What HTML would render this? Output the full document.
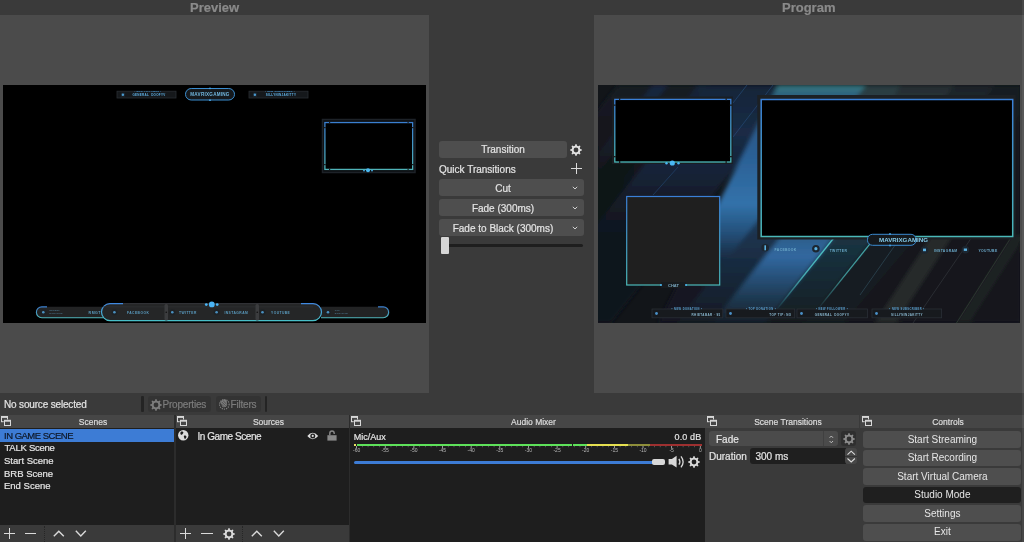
<!DOCTYPE html>
<html><head><meta charset="utf-8">
<style>
*{box-sizing:border-box;margin:0;padding:0}
html,body{width:1024px;height:542px;overflow:hidden;background:#3a3a3a;font-family:"Liberation Sans",sans-serif;color:#e4e4e4}
.t{-webkit-text-stroke:0.2px currentColor}
body{will-change:transform}
.a{position:absolute}
.t{white-space:nowrap;line-height:1}
.ptitle{font-weight:bold;font-size:13px;color:#8a8a8a;top:1px}
.panel{background:#4b4b4b;top:15px;height:378px}
.btn{background:#4e4e4e;border-radius:3px}
.dtitle{top:415px;height:13px;background:#464646}
.dtext{font-size:8.5px;color:#dcdcdc;top:417.5px;text-align:center}
.list{background:#1e1e1e}
.cbtn{position:absolute;left:863.4px;width:158px;height:16.8px;background:#4e4e4e;border-radius:3px;font-size:10px;color:#e6e6e6;text-align:center;line-height:1;padding-top:3.7px}
.f10{font-size:10px}
.row{position:absolute;left:4px;font-size:9.5px}
svg{position:absolute;overflow:visible}
</style></head><body>
<svg width="0" height="0" style="position:absolute">
<defs>
<path id="gear" fill-rule="evenodd" d="M4.94,1.73 L5.58,0.11 L6.42,0.11 L7.06,1.73 L8.27,2.23 L9.87,1.54 L10.46,2.13 L9.77,3.73 L10.27,4.94 L11.89,5.58 L11.89,6.42 L10.27,7.06 L9.77,8.27 L10.46,9.87 L9.87,10.46 L8.27,9.77 L7.06,10.27 L6.42,11.89 L5.58,11.89 L4.94,10.27 L3.73,9.77 L2.13,10.46 L1.54,9.87 L2.23,8.27 L1.73,7.06 L0.11,6.42 L0.11,5.58 L1.73,4.94 L2.23,3.73 L1.54,2.13 L2.13,1.54 L3.73,2.23Z M8.4,6 A2.4,2.4 0 1,0 3.6,6 A2.4,2.4 0 1,0 8.4,6Z"/>
<g id="float">
<rect x="1.5" y="1.5" width="6" height="5.2" fill="none" stroke="#d8d8d8" stroke-width="1"/>
<rect x="1.5" y="1.3" width="6" height="1.6" fill="#d8d8d8"/>
<rect x="3.7" y="4.5" width="7" height="6" fill="#464646"/>
<rect x="4.5" y="5.3" width="6" height="5.2" fill="none" stroke="#d8d8d8" stroke-width="1"/>
<rect x="4.5" y="5.1" width="6" height="1.6" fill="#d8d8d8"/>
</g>
</defs>
</svg>

<!-- titles -->
<div class="a t ptitle" style="left:190px">Preview</div>
<div class="a t ptitle" style="left:782px">Program</div>

<!-- preview panel -->
<div class="a panel" style="left:0;width:429px"></div>
<div class="a" id="prev" style="left:3px;top:85px;width:423px;height:238px;background:#000;overflow:hidden">
<svg style="left:0;top:0" width="423" height="238" viewBox="0 0 423 238">
<defs>
<linearGradient id="bt" x1="0" y1="0" x2="0" y2="1"><stop offset="0" stop-color="#3a7fd0"/><stop offset="1" stop-color="#4fb3b8"/></linearGradient>
<linearGradient id="bt2" x1="0" y1="0" x2="0" y2="1"><stop offset="0" stop-color="#3f88e0"/><stop offset="1" stop-color="#48c0c8"/></linearGradient>
</defs>
<!-- top boxes -->
<rect x="114" y="6.2" width="59" height="6.8" fill="#15181b" stroke="#2a2e33" stroke-width="0.8"/>
<rect x="118" y="7.8" width="3.8" height="3.8" fill="#1f2a33"/>
<circle cx="119.9" cy="9.7" r="1.2" fill="#4a9ad0"/>
<rect x="246" y="6.2" width="59" height="6.8" fill="#15181b" stroke="#2a2e33" stroke-width="0.8"/>
<rect x="250" y="7.8" width="3.8" height="3.8" fill="#1f2a33"/>
<circle cx="251.9" cy="9.7" r="1.2" fill="#4a9ad0"/>
<g font-family="Liberation Sans" font-weight="bold" text-anchor="middle">
<text x="145" y="6.6" font-size="2.3" fill="#4aa0e0" letter-spacing="0.3">• NEW FOLLOWER •</text>
<text x="146" y="11.3" font-size="3" fill="#5fb0e4" letter-spacing="0.3">GENERAL_DOOFYV</text>
<text x="277" y="6.6" font-size="2.3" fill="#4aa0e0" letter-spacing="0.3">• NEW SUBSCRIBER •</text>
<text x="278" y="11.3" font-size="3" fill="#5fb0e4" letter-spacing="0.3">SILLYNINJAKITTY</text>
</g>
<rect x="182.5" y="3.5" width="49" height="11.5" rx="5.7" fill="#15191d" stroke="#3b8ed0" stroke-width="1"/>
<circle cx="207" cy="3.3" r="0.9" fill="#4aa8e8"/><circle cx="207" cy="15.2" r="0.9" fill="#4aa8e8"/>
<text x="207" y="11" text-anchor="middle" font-size="4.6" font-weight="bold" fill="#72b8e0" font-family="Liberation Sans" letter-spacing="0.25">MAVRIXGAMING</text>
<!-- webcam frame -->
<rect x="319.5" y="34.5" width="92.5" height="53" fill="#0c0f12" stroke="#1d2228" stroke-width="1.5"/>
<rect x="321.9" y="37.55" width="87.75" height="46.86" fill="#000" stroke="url(#bt)" stroke-width="1.3"/><g fill="#1a1e22"><rect x="326" y="36.5" width="1.2" height="2"/><rect x="404.5" y="36.5" width="1.2" height="2"/><rect x="326" y="83.5" width="1.2" height="2"/><rect x="404.5" y="83.5" width="1.2" height="2"/><rect x="320.8" y="42" width="2" height="1.2"/><rect x="408.8" y="42" width="2" height="1.2"/><rect x="320.8" y="79" width="2" height="1.2"/><rect x="408.8" y="79" width="2" height="1.2"/></g>
<circle cx="365" cy="85.2" r="2" fill="#4ab8f0"/><circle cx="361" cy="85.6" r="0.9" fill="#4ab8f0"/><circle cx="369" cy="85.6" r="0.9" fill="#4ab8f0"/>
<!-- bottom bar -->
<path d="M38.5,221.7 H100 V233 H38.5 A5.65,5.65 0 0,1 38.5,221.7Z" fill="#222324"/>
<path d="M44,221.9 H38.8 A5.4,5.4 0 0,0 38.8,232.7 H100" fill="none" stroke="url(#bt)" stroke-width="1.1"/>
<path d="M381,221.7 H318 V233 H381 A5.65,5.65 0 0,0 381,221.7Z" fill="#222324"/>
<path d="M375,221.9 H380.2 A5.4,5.4 0 0,1 380.2,232.7 H318" fill="none" stroke="url(#bt)" stroke-width="1.1"/>
<path d="M107,218.6 H310 A8.5,8.5 0 0,1 310,235.6 H107 A8.5,8.5 0 0,1 107,218.6Z" fill="#252627" stroke="#34363a" stroke-width="1"/>
<path d="M120,218.6 H107 A8.5,8.5 0 0,0 107,235.6 H310 A8.5,8.5 0 0,0 310,218.6 H298" fill="none" stroke="url(#bt2)" stroke-width="1.2"/>
<rect x="100" y="221.5" width="210" height="0.8" fill="#2e3032"/>
<rect x="161.5" y="219" width="3.5" height="16.5" rx="1.5" fill="#3b3c3e"/>
<rect x="252.5" y="219" width="3.5" height="16.5" rx="1.5" fill="#3b3c3e"/>
<circle cx="163.25" cy="227.2" r="0.8" fill="#111"/><circle cx="254.25" cy="227.2" r="0.8" fill="#111"/>
<circle cx="208.8" cy="219.4" r="2.9" fill="#4ab4f4"/><circle cx="203.3" cy="219.6" r="1.4" fill="#4ab4f4"/><circle cx="214.2" cy="219.6" r="1.4" fill="#4ab4f4"/>
<g fill="#5a9cc0" font-family="Liberation Sans" font-size="3.3" font-weight="bold" letter-spacing="0.45">
<text x="124" y="228.8">FACEBOOK</text><text x="176" y="228.8">TWITTER</text><text x="221.4" y="228.8">INSTAGRAM</text><text x="268" y="228.8">YOUTUBE</text>
<text x="85.6" y="228.6" font-size="3.6">RMGT</text>
</g>
<g fill="#4e7890" font-family="Liberation Sans" font-size="2.2" font-weight="bold" letter-spacing="0.2">
<text x="46.5" y="226.2">RECENT</text><text x="46.5" y="229.4">DONATION</text>
<text x="331.8" y="226.2">TOP</text><text x="331.8" y="229.4">DONATION</text>
</g>
<g fill="#1e2226"><circle cx="40.3" cy="227.2" r="3"/><circle cx="111.4" cy="227.2" r="3"/><circle cx="169.3" cy="227.2" r="3"/><circle cx="213.6" cy="227.2" r="3"/><circle cx="259.5" cy="227.2" r="3"/><circle cx="325" cy="227.2" r="3"/></g>
<g fill="#4a90c0"><circle cx="40.3" cy="227.2" r="1.3"/><circle cx="111.4" cy="227.2" r="1.3"/><circle cx="169.3" cy="227.2" r="1.3"/><circle cx="213.6" cy="227.2" r="1.3"/><circle cx="259.5" cy="227.2" r="1.3"/><circle cx="325" cy="227.2" r="1.3"/></g>
</svg>
</div>

<!-- program panel -->
<div class="a panel" style="left:594px;width:430px"></div>
<div class="a" id="prog" style="left:598px;top:85px;width:422px;height:238px;background:#121519;overflow:hidden">
<svg style="left:0;top:0" width="423" height="238" viewBox="0 0 423 238">
<defs>
<linearGradient id="pt" x1="0" y1="0" x2="0" y2="1"><stop offset="0" stop-color="#3a80d8"/><stop offset="1" stop-color="#4ab8b8"/></linearGradient>
<linearGradient id="bg1" x1="0" y1="1" x2="1" y2="0"><stop offset="0" stop-color="#1a2a3e"/><stop offset="0.5" stop-color="#2d5a88"/><stop offset="1" stop-color="#3a7890"/></linearGradient>
<linearGradient id="bg2" x1="0" y1="0" x2="1" y2="0"><stop offset="0" stop-color="#162436"/><stop offset="1" stop-color="#1f3a58"/></linearGradient>
<filter id="bl" x="-20%" y="-20%" width="140%" height="140%"><feGaussianBlur stdDeviation="2"/></filter>
<filter id="bl4" x="-30%" y="-30%" width="160%" height="160%"><feGaussianBlur stdDeviation="5"/></filter>
</defs>
<!-- background streaks -->
<defs>
<linearGradient id="gZ" x1="0" y1="0" x2="0" y2="238" gradientUnits="userSpaceOnUse"><stop offset="0" stop-color="#151b24"/><stop offset="0.15" stop-color="#13181f"/><stop offset="0.3" stop-color="#111519"/></linearGradient>
<linearGradient id="gS" x1="0" y1="0" x2="0" y2="238" gradientUnits="userSpaceOnUse"><stop offset="0" stop-color="#1a2840"/><stop offset="0.2" stop-color="#162234"/><stop offset="0.45" stop-color="#111519" stop-opacity="0"/></linearGradient>
<linearGradient id="gA0" x1="0" y1="0" x2="0" y2="238" gradientUnits="userSpaceOnUse"><stop offset="0" stop-color="#172438"/><stop offset="0.2" stop-color="#1a2c46"/><stop offset="0.38" stop-color="#152236"/><stop offset="0.52" stop-color="#121a24"/><stop offset="0.7" stop-color="#11161c"/></linearGradient>
<linearGradient id="gW" x1="0" y1="0" x2="0" y2="238" gradientUnits="userSpaceOnUse"><stop offset="0" stop-color="#36787e"/><stop offset="0.06" stop-color="#2a5a80"/><stop offset="0.25" stop-color="#2a5c90"/><stop offset="0.5" stop-color="#3272aa"/><stop offset="0.62" stop-color="#24507a"/><stop offset="0.72" stop-color="#1a2e46"/><stop offset="0.85" stop-color="#121820"/></linearGradient>
<linearGradient id="gA" x1="0" y1="0" x2="0" y2="238" gradientUnits="userSpaceOnUse"><stop offset="0" stop-color="#36787e"/><stop offset="0.15" stop-color="#2c6088"/><stop offset="0.3" stop-color="#3376b0"/><stop offset="0.42" stop-color="#3070a8"/><stop offset="0.56" stop-color="#22466a"/><stop offset="0.7" stop-color="#141c26"/></linearGradient>
<linearGradient id="gA2" x1="0" y1="0" x2="0" y2="238" gradientUnits="userSpaceOnUse"><stop offset="0" stop-color="#2c3c40"/><stop offset="0.45" stop-color="#244a6c"/><stop offset="0.62" stop-color="#1c3450"/><stop offset="0.8" stop-color="#18283a"/><stop offset="1" stop-color="#121a24"/></linearGradient>
<linearGradient id="gB" x1="0" y1="0" x2="0" y2="238" gradientUnits="userSpaceOnUse"><stop offset="0" stop-color="#272d31"/><stop offset="0.6" stop-color="#2c5a80"/><stop offset="0.72" stop-color="#3168a0"/><stop offset="0.9" stop-color="#1e3850"/><stop offset="1" stop-color="#161e28"/></linearGradient>
<linearGradient id="gC" x1="0" y1="0" x2="0" y2="238" gradientUnits="userSpaceOnUse"><stop offset="0" stop-color="#1e2428"/><stop offset="0.65" stop-color="#1a3442"/><stop offset="0.9" stop-color="#16242c"/><stop offset="1" stop-color="#14191e"/></linearGradient>
<linearGradient id="gL" x1="0" y1="0" x2="0" y2="238" gradientUnits="userSpaceOnUse"><stop offset="0.55" stop-color="#50c8c8" stop-opacity="0"/><stop offset="0.66" stop-color="#50c8c8" stop-opacity="0.95"/><stop offset="0.8" stop-color="#50c8c8" stop-opacity="0.8"/><stop offset="0.95" stop-color="#50c8c8" stop-opacity="0"/></linearGradient>
</defs>
<g filter="url(#bl)">
<polygon points="20,0 130,0 -60,238 -170,238" fill="url(#gZ)"/><polygon points="55,0 70,0 0,88 0,69" fill="url(#gS)"/><polygon points="100,0 112,0 0,140 0,125" fill="url(#gS)" opacity="0.8"/>
<polygon points="110,0 203,0 13,238 -80,238" fill="url(#gA0)"/>
<polygon points="180,0 300,0 230,238 60,238" fill="url(#gW)"/>
<polygon points="268,0 304,0 114,238 78,238" fill="url(#gA2)"/>
<polygon points="304,0 357,0 167,238 114,238" fill="url(#gB)"/>
<polygon points="357,0 398,0 208,238 167,238" fill="url(#gC)"/>
<polygon points="398,0 423,0 423,30 246,238 208,238" fill="#181c20"/>
<polygon points="423,30 423,238 246,238" fill="#15181b"/>
<polygon points="334,150 355,150 298,238 277,238" fill="#26292c"/>
<polygon points="414.6,150 427.6,150 371.5,238 358.5,238" fill="#1e2124"/>
</g>
<polygon points="357,0 358.8,0 168.8,238 167,238" fill="url(#gL)"/>
<polygon points="398,0 399.6,0 209.6,238 208,238" fill="url(#gL)" opacity="0.85"/>
<line x1="374" y1="152" x2="315" y2="238" stroke="#3a4044" stroke-width="0.6" opacity="0.9"/><line x1="414.6" y1="150" x2="358.5" y2="238" stroke="#3e4a40" stroke-width="0.6" opacity="0.9"/><line x1="300" y1="156" x2="262" y2="210" stroke="#3a6070" stroke-width="0.6" opacity="0.8"/>
<line x1="80" y1="82" x2="55" y2="110" stroke="#2a5a90" stroke-width="0.7" opacity="0.6"/><line x1="149" y1="0" x2="135" y2="18" stroke="#2a5a90" stroke-width="0.8" opacity="0.6"/><line x1="175" y1="0" x2="135" y2="52" stroke="#2e6098" stroke-width="0.8" opacity="0.5"/>
<!-- webcam frame -->
<rect x="14" y="11.5" width="120.8" height="67.5" fill="#1a1e22"/>
<rect x="16.8" y="14.4" width="116" height="62.6" fill="#000" stroke="url(#pt)" stroke-width="1.3"/><g fill="#1a1e22"><rect x="21" y="13.2" width="1.3" height="2.2"/><rect x="127.5" y="13.2" width="1.3" height="2.2"/><rect x="21" y="76" width="1.3" height="2.2"/><rect x="127.5" y="76" width="1.3" height="2.2"/><rect x="15.6" y="19.5" width="2.2" height="1.3"/><rect x="131.8" y="19.5" width="2.2" height="1.3"/><rect x="15.6" y="71" width="2.2" height="1.3"/><rect x="131.8" y="71" width="2.2" height="1.3"/></g>
<circle cx="74.3" cy="78" r="2.6" fill="#4ab8f4"/><circle cx="68.5" cy="78.3" r="1.2" fill="#4ab8f4"/><circle cx="80.5" cy="78.3" r="1.2" fill="#4ab8f4"/>
<!-- big frame -->
<rect x="159.3" y="10" width="258.4" height="144.5" fill="#1c2024"/>
<rect x="163.2" y="14.5" width="251.5" height="137" fill="#000" stroke="url(#pt)" stroke-width="1.5"/>
<!-- chat -->
<rect x="28.7" y="111.5" width="93" height="88.5" fill="#1f1f1f" stroke="url(#pt)" stroke-width="1.2"/>
<rect x="63" y="197" width="25" height="6" fill="#181b1e"/>
<circle cx="63" cy="200" r="1" fill="#4ab8f4"/><circle cx="88" cy="200" r="1" fill="#4ab8f4"/>
<text x="75.5" y="201.8" text-anchor="middle" font-size="4" font-weight="bold" fill="#7aa8c0" font-family="Liberation Sans">CHAT</text>
<!-- mavrix pill -->
<rect x="269.5" y="149.3" width="48.5" height="11" rx="5" fill="#15191d" stroke="#3a8ad0" stroke-width="1"/>
<circle cx="292" cy="149" r="0.9" fill="#4aa8e8"/><circle cx="292" cy="160.5" r="0.9" fill="#4aa8e8"/>
<text x="281" y="157.2" font-size="6.2" font-weight="bold" fill="#84cae8" font-family="Liberation Sans" letter-spacing="0">MAVRIXGAMING</text>
<!-- socials -->
<g fill="#1c2630"><circle cx="167.2" cy="162.7" r="3.8"/><circle cx="217.9" cy="163.7" r="3.8"/><circle cx="326.5" cy="165" r="3.8"/><circle cx="367.4" cy="164.7" r="3.8"/></g>
<g fill="#5ab0e0"><rect x="166.4" y="160.3" width="1.6" height="5"/><circle cx="217.9" cy="163.7" r="1.6"/><rect x="325" y="163.6" width="3" height="2.6"/><rect x="365.8" y="163.5" width="3.2" height="2.4"/></g>
<g fill="#6aa8c8" font-family="Liberation Sans" font-size="3.4" font-weight="bold" letter-spacing="0.35">
<text x="176.6" y="165.6">FACEBOOK</text><text x="231.7" y="166.8">TWITTER</text><text x="336" y="166.8">INSTAGRAM</text><text x="380.5" y="166.8">YOUTUBE</text>
</g>
<!-- bottom bars -->
<g fill="#171a1e" stroke="#2a2f36" stroke-width="0.8">
<rect x="54" y="224" width="70.8" height="8.8"/><rect x="128" y="224" width="68.7" height="8.8"/><rect x="199" y="224" width="70.5" height="8.8"/><rect x="274" y="224" width="69.6" height="8.8"/>
</g>
<g fill="#4a90c8"><circle cx="58.5" cy="228.5" r="1.4"/><circle cx="132.5" cy="228.5" r="1.4"/><circle cx="203.5" cy="228.5" r="1.4"/><circle cx="278.5" cy="228.5" r="1.4"/></g>
<g fill="#5aa0d0" font-family="Liberation Sans" font-size="2.6" font-weight="bold" text-anchor="middle" letter-spacing="0.45">
<text x="89" y="225.4">• NEW DONATION •</text><text x="163" y="225.4">• TOP DONATION •</text><text x="234" y="225.4">• NEW FOLLOWER •</text><text x="309" y="225.4">• NEW SUBSCRIBER •</text>
</g>
<g fill="#8ab8d0" font-family="Liberation Sans" font-size="3" font-weight="bold" letter-spacing="0.4">
<text x="122.6" y="230.8" text-anchor="end">RHIETABAR · 95</text><text x="193.6" y="230.8" text-anchor="end">TOP TIP: NO</text><text x="234" y="230.8" text-anchor="middle">GENERAL_DOOFYV</text><text x="309" y="230.8" text-anchor="middle">SILLYNINJAKITTY</text>
</g>
</svg>
</div>

<!-- transitions middle -->
<div class="a btn" style="left:439px;top:141px;width:128px;height:17px"></div>
<div class="a t f10" style="left:439px;top:145px;width:128px;text-align:center">Transition</div>
<svg style="left:570.3px;top:143.5px" width="12" height="12"><use href="#gear" fill="#e0e0e0"/></svg>
<div class="a t f10" style="left:439px;top:165px">Quick Transitions</div>
<div class="a" style="left:571px;top:168px;width:10.8px;height:1.1px;background:#dadada"></div>
<div class="a" style="left:575.8px;top:163.1px;width:1.1px;height:10.8px;background:#dadada"></div>

<div class="a btn" style="left:439px;top:179px;width:145px;height:17px"></div>
<div class="a t f10" style="left:439px;top:183.5px;width:128px;text-align:center">Cut</div>
<div class="a btn" style="left:439px;top:199px;width:145px;height:17px"></div>
<div class="a t f10" style="left:439px;top:203.5px;width:128px;text-align:center">Fade (300ms)</div>
<div class="a btn" style="left:439px;top:219px;width:145px;height:17px"></div>
<div class="a t f10" style="left:439px;top:223.5px;width:128px;text-align:center">Fade to Black (300ms)</div>
<svg style="left:572px;top:185.5px" width="6" height="4"><path d="M0.8,0.8 L3,3 L5.2,0.8" fill="none" stroke="#d0d0d0" stroke-width="1"/></svg>
<svg style="left:572px;top:205.5px" width="6" height="4"><path d="M0.8,0.8 L3,3 L5.2,0.8" fill="none" stroke="#d0d0d0" stroke-width="1"/></svg>
<svg style="left:572px;top:225.5px" width="6" height="4"><path d="M0.8,0.8 L3,3 L5.2,0.8" fill="none" stroke="#d0d0d0" stroke-width="1"/></svg>
<div class="a" style="left:448px;top:243.5px;width:135px;height:3.5px;background:#1e1e1e;border-radius:2px"></div>
<div class="a" style="left:440.5px;top:237px;width:8.5px;height:17px;background:#d6d6d6;border-radius:1px"></div>

<!-- toolbar row -->
<div class="a t f10" style="left:4px;top:400px;letter-spacing:-0.17px">No source selected</div>
<div class="a" style="left:141.4px;top:395.8px;width:2.2px;height:16px;background:#242424;border-radius:1px"></div>
<div class="a" style="left:148.2px;top:396.4px;width:62.9px;height:15.3px;background:#333333;border-radius:3px"></div>
<svg style="left:150px;top:398.5px" width="12" height="12"><use href="#gear" fill="#7c7c7c"/></svg>
<div class="a t f10" style="left:162.5px;top:400px;color:#7c7c7c;letter-spacing:-0.2px">Properties</div>
<div class="a" style="left:215.9px;top:396.4px;width:44.7px;height:15.3px;background:#333333;border-radius:3px"></div>
<svg style="left:217.5px;top:398px" width="12" height="12" viewBox="0 0 12 12"><circle cx="6.3" cy="6.3" r="4.8" fill="none" stroke="#7c7c7c" stroke-width="1.2" stroke-dasharray="1.2 1"/><path d="M2.2,4.2 A4,4 0 0,1 8.6,2.6 L9.2,6.8 A3.6,3.6 0 0,1 4.6,9 Z" fill="#7c7c7c"/><path d="M3.6,3.8 L7.6,7.8 M5.2,2.8 L8.6,6.2 M3,5.6 L6.2,8.8" stroke="#333" stroke-width="0.6"/></svg>
<div class="a t f10" style="left:230.5px;top:400px;color:#7c7c7c;letter-spacing:-0.2px">Filters</div>
<div class="a" style="left:265.2px;top:395.8px;width:2.2px;height:16px;background:#242424;border-radius:1px"></div>

<!-- dock titles -->
<div class="a dtitle" style="left:0;width:174px"></div>
<div class="a dtitle" style="left:176px;width:173px"></div>
<div class="a dtitle" style="left:350px;width:355px"></div>
<div class="a dtitle" style="left:705px;width:154px"></div>
<div class="a dtitle" style="left:860px;width:164px"></div>
<svg style="left:0;top:415px" width="12" height="12"><use href="#float"/></svg>
<svg style="left:176px;top:415px" width="12" height="12"><use href="#float"/></svg>
<svg style="left:350.2px;top:415px" width="12" height="12"><use href="#float"/></svg>
<svg style="left:705.8px;top:415px" width="12" height="12"><use href="#float"/></svg>
<svg style="left:860.6px;top:415px" width="12" height="12"><use href="#float"/></svg>
<div class="a t dtext" style="left:0;width:186px">Scenes</div>
<div class="a t dtext" style="left:176px;width:185px">Sources</div>
<div class="a t dtext" style="left:350px;width:367px">Audio Mixer</div>
<div class="a t dtext" style="left:705px;width:166px">Scene Transitions</div>
<div class="a t dtext" style="left:860px;width:176px">Controls</div>

<!-- scenes -->
<div class="a list" style="left:0;top:428px;width:174px;height:97px"></div>
<div class="a" style="left:0;top:429px;width:174px;height:13px;background:#3d7cd5"></div>
<div class="a t row" style="top:430.5px;color:#0e1828;letter-spacing:-0.5px">IN GAME SCENE</div>
<div class="a t row" style="top:443.2px;letter-spacing:-0.26px;left:4.5px">TALK Scene</div>
<div class="a t row" style="top:455.9px">Start Scene</div>
<div class="a t row" style="top:468.6px">BRB Scene</div>
<div class="a t row" style="top:481.3px">End Scene</div>
<div class="a" style="left:0;top:525px;width:174px;height:17px;background:#3a3a3a"></div>

<!-- sources -->
<div class="a list" style="left:176px;top:428px;width:173px;height:97px"></div>
<div class="a" style="left:176px;top:525px;width:173px;height:17px;background:#3a3a3a"></div>
<div class="a" style="left:174px;top:415px;width:2px;height:127px;background:#2c2c2c"></div>
<div class="a" style="left:349px;top:415px;width:1px;height:127px;background:#2c2c2c"></div>

<!-- audio mixer -->
<div class="a list" style="left:350px;top:428px;width:355px;height:114px"></div>


<!-- sources rows -->
<svg style="left:178.4px;top:430px" width="11" height="11" viewBox="0 0 11 11"><circle cx="5.25" cy="5.25" r="5.2" fill="#dcdcdc"/><path d="M3.2,1.6 C4.2,1.2 5.2,1.8 5.4,2.6 C5.6,3.6 4.6,3.8 4.2,4.4 C3.6,5.2 2.6,4.6 2.4,3.8 C2.2,3 2.6,2 3.2,1.6Z M6.4,5.6 C7.2,5.4 8.2,5.8 8.4,6.6 C8.6,7.6 7.8,8.6 7,9.2 C6.4,8.6 6.4,7.8 6,7.2 C5.8,6.6 5.8,5.8 6.4,5.6Z" fill="#1e1e1e"/></svg>
<div class="a t f10" style="left:197.5px;top:431.5px;letter-spacing:-0.45px">In Game Scene</div>
<svg style="left:306.6px;top:431.5px" width="12" height="8" viewBox="0 0 12 8"><path d="M0.3,3.9 Q5.7,-2.6 11.2,3.9 Q5.7,10.4 0.3,3.9Z" fill="#dedede"/><circle cx="5.75" cy="3.9" r="2.5" fill="#1e1e1e"/><circle cx="5.75" cy="3.9" r="1.1" fill="#dedede"/></svg>
<svg style="left:326.5px;top:429.8px" width="10" height="11" viewBox="0 0 10 11"><rect x="0.4" y="5.2" width="9.2" height="5.4" fill="#888"/><path d="M2.8,5.2 V3.2 A2.2,2.2 0 0,1 7.2,3.2 V4" fill="none" stroke="#888" stroke-width="1.4"/></svg>

<!-- bottom toolbars -->
<div class="a" style="left:4px;top:532.7px;width:11.3px;height:1.3px;background:#dadada"></div>
<div class="a" style="left:9px;top:527.7px;width:1.3px;height:11.3px;background:#dadada"></div>
<div class="a" style="left:24.8px;top:532.7px;width:11.3px;height:1.3px;background:#dadada"></div>
<div class="a" style="left:44px;top:526px;width:1px;height:16px;border-left:1px dotted #262626"></div>
<svg style="left:53px;top:530px" width="12" height="7"><path d="M0.8,6.3 L5.8,1.2 L10.8,6.3" fill="none" stroke="#dadada" stroke-width="1.4"/></svg>
<svg style="left:74.5px;top:530px" width="12" height="7"><path d="M0.8,0.8 L5.8,5.9 L10.8,0.8" fill="none" stroke="#dadada" stroke-width="1.4"/></svg>

<div class="a" style="left:180px;top:532.7px;width:11.3px;height:1.3px;background:#dadada"></div>
<div class="a" style="left:185.1px;top:527.7px;width:1.3px;height:11.3px;background:#dadada"></div>
<div class="a" style="left:201.4px;top:532.7px;width:11.3px;height:1.3px;background:#dadada"></div>
<svg style="left:222.5px;top:527.5px" width="12" height="12"><use href="#gear" fill="#dadada"/></svg>
<div class="a" style="left:242px;top:526px;width:1px;height:16px;border-left:1px dotted #262626"></div>
<svg style="left:251px;top:530px" width="12" height="7"><path d="M0.8,6.3 L5.8,1.2 L10.8,6.3" fill="none" stroke="#dadada" stroke-width="1.4"/></svg>
<svg style="left:272.5px;top:530px" width="12" height="7"><path d="M0.8,0.8 L5.8,5.9 L10.8,0.8" fill="none" stroke="#dadada" stroke-width="1.4"/></svg>

<!-- audio mixer content -->
<div class="a t" style="left:353.8px;top:432.8px;font-size:9px">Mic/Aux</div>
<div class="a t" style="left:674.5px;top:432.9px;font-size:9px;letter-spacing:0.15px">0.0 dB</div>
<div class="a" style="left:353.5px;top:443.5px;width:2.7px;height:2.7px;background:#e8e060"></div>
<div class="a" style="left:357px;top:444px;width:214.6px;height:2px;background:#5ee25a"></div>
<div class="a" style="left:573.4px;top:444px;width:13.2px;height:2px;background:#5ee25a"></div>
<div class="a" style="left:586.6px;top:444px;width:41.3px;height:2px;background:#e6e050"></div>
<div class="a" style="left:627.9px;top:444px;width:22px;height:2px;background:#8e8e3a"></div>
<div class="a" style="left:649.9px;top:444px;width:51.8px;height:2px;background:#9e3030"></div>
<svg style="left:350px;top:446px" width="360" height="8" id="ticks"><rect x="6.20" y="0" width="0.8" height="2.2" fill="#bbb"/><rect x="11.98" y="0.2" width="0.7" height="1" fill="#777"/><rect x="17.71" y="0.2" width="0.7" height="1" fill="#777"/><rect x="23.43" y="0.2" width="0.7" height="1" fill="#777"/><rect x="29.16" y="0.2" width="0.7" height="1" fill="#777"/><rect x="34.84" y="0" width="0.8" height="2.2" fill="#bbb"/><rect x="40.62" y="0.2" width="0.7" height="1" fill="#777"/><rect x="46.35" y="0.2" width="0.7" height="1" fill="#777"/><rect x="52.07" y="0.2" width="0.7" height="1" fill="#777"/><rect x="57.80" y="0.2" width="0.7" height="1" fill="#777"/><rect x="63.48" y="0" width="0.8" height="2.2" fill="#bbb"/><rect x="69.26" y="0.2" width="0.7" height="1" fill="#777"/><rect x="74.99" y="0.2" width="0.7" height="1" fill="#777"/><rect x="80.71" y="0.2" width="0.7" height="1" fill="#777"/><rect x="86.44" y="0.2" width="0.7" height="1" fill="#777"/><rect x="92.12" y="0" width="0.8" height="2.2" fill="#bbb"/><rect x="97.90" y="0.2" width="0.7" height="1" fill="#777"/><rect x="103.63" y="0.2" width="0.7" height="1" fill="#777"/><rect x="109.35" y="0.2" width="0.7" height="1" fill="#777"/><rect x="115.08" y="0.2" width="0.7" height="1" fill="#777"/><rect x="120.76" y="0" width="0.8" height="2.2" fill="#bbb"/><rect x="126.54" y="0.2" width="0.7" height="1" fill="#777"/><rect x="132.27" y="0.2" width="0.7" height="1" fill="#777"/><rect x="137.99" y="0.2" width="0.7" height="1" fill="#777"/><rect x="143.72" y="0.2" width="0.7" height="1" fill="#777"/><rect x="149.40" y="0" width="0.8" height="2.2" fill="#bbb"/><rect x="155.18" y="0.2" width="0.7" height="1" fill="#777"/><rect x="160.91" y="0.2" width="0.7" height="1" fill="#777"/><rect x="166.63" y="0.2" width="0.7" height="1" fill="#777"/><rect x="172.36" y="0.2" width="0.7" height="1" fill="#777"/><rect x="178.04" y="0" width="0.8" height="2.2" fill="#bbb"/><rect x="183.82" y="0.2" width="0.7" height="1" fill="#777"/><rect x="189.55" y="0.2" width="0.7" height="1" fill="#777"/><rect x="195.27" y="0.2" width="0.7" height="1" fill="#777"/><rect x="201.00" y="0.2" width="0.7" height="1" fill="#777"/><rect x="206.68" y="0" width="0.8" height="2.2" fill="#bbb"/><rect x="212.46" y="0.2" width="0.7" height="1" fill="#777"/><rect x="218.19" y="0.2" width="0.7" height="1" fill="#777"/><rect x="223.91" y="0.2" width="0.7" height="1" fill="#777"/><rect x="229.64" y="0.2" width="0.7" height="1" fill="#777"/><rect x="235.32" y="0" width="0.8" height="2.2" fill="#bbb"/><rect x="241.10" y="0.2" width="0.7" height="1" fill="#777"/><rect x="246.83" y="0.2" width="0.7" height="1" fill="#777"/><rect x="252.55" y="0.2" width="0.7" height="1" fill="#777"/><rect x="258.28" y="0.2" width="0.7" height="1" fill="#777"/><rect x="263.96" y="0" width="0.8" height="2.2" fill="#bbb"/><rect x="269.74" y="0.2" width="0.7" height="1" fill="#777"/><rect x="275.47" y="0.2" width="0.7" height="1" fill="#777"/><rect x="281.19" y="0.2" width="0.7" height="1" fill="#777"/><rect x="286.92" y="0.2" width="0.7" height="1" fill="#777"/><rect x="292.60" y="0" width="0.8" height="2.2" fill="#bbb"/><rect x="298.38" y="0.2" width="0.7" height="1" fill="#777"/><rect x="304.11" y="0.2" width="0.7" height="1" fill="#777"/><rect x="309.83" y="0.2" width="0.7" height="1" fill="#777"/><rect x="315.56" y="0.2" width="0.7" height="1" fill="#777"/><rect x="321.24" y="0" width="0.8" height="2.2" fill="#bbb"/><rect x="327.02" y="0.2" width="0.7" height="1" fill="#777"/><rect x="332.75" y="0.2" width="0.7" height="1" fill="#777"/><rect x="338.47" y="0.2" width="0.7" height="1" fill="#777"/><rect x="344.20" y="0.2" width="0.7" height="1" fill="#777"/><rect x="349.88" y="0" width="0.8" height="2.2" fill="#bbb"/><text x="6.60" y="6.4" text-anchor="middle" font-size="5" fill="#b8b8b8" font-family="Liberation Sans">-60</text><text x="35.24" y="6.4" text-anchor="middle" font-size="5" fill="#b8b8b8" font-family="Liberation Sans">-55</text><text x="63.88" y="6.4" text-anchor="middle" font-size="5" fill="#b8b8b8" font-family="Liberation Sans">-50</text><text x="92.52" y="6.4" text-anchor="middle" font-size="5" fill="#b8b8b8" font-family="Liberation Sans">-45</text><text x="121.16" y="6.4" text-anchor="middle" font-size="5" fill="#b8b8b8" font-family="Liberation Sans">-40</text><text x="149.80" y="6.4" text-anchor="middle" font-size="5" fill="#b8b8b8" font-family="Liberation Sans">-35</text><text x="178.44" y="6.4" text-anchor="middle" font-size="5" fill="#b8b8b8" font-family="Liberation Sans">-30</text><text x="207.08" y="6.4" text-anchor="middle" font-size="5" fill="#b8b8b8" font-family="Liberation Sans">-25</text><text x="235.72" y="6.4" text-anchor="middle" font-size="5" fill="#b8b8b8" font-family="Liberation Sans">-20</text><text x="264.36" y="6.4" text-anchor="middle" font-size="5" fill="#b8b8b8" font-family="Liberation Sans">-15</text><text x="293.00" y="6.4" text-anchor="middle" font-size="5" fill="#b8b8b8" font-family="Liberation Sans">-10</text><text x="321.64" y="6.4" text-anchor="middle" font-size="5" fill="#b8b8b8" font-family="Liberation Sans">-5</text><text x="350.28" y="6.4" text-anchor="middle" font-size="5" fill="#b8b8b8" font-family="Liberation Sans">0</text></svg>
<div class="a" style="left:353.8px;top:461px;width:300px;height:3px;background:#3d7cd5;border-radius:1.5px"></div>
<div class="a" style="left:651.7px;top:459.1px;width:13.1px;height:6.3px;background:#d8d8d8;border-radius:2px"></div>
<svg style="left:667.5px;top:455.8px" width="17" height="12" viewBox="0 0 17 12"><path d="M0.6,2.9 H3.9 L8.6,-0.3 V11.5 L3.9,8.4 H0.6Z" fill="#d8d8d8"/><path d="M10.9,2.9 Q12.9,5.8 10.9,8.7" fill="none" stroke="#d8d8d8" stroke-width="1.3"/><path d="M13,0.3 Q17.2,5.8 13,11.3" fill="none" stroke="#d8d8d8" stroke-width="1.3"/></svg>
<svg style="left:687.8px;top:456.2px" width="12" height="12"><use href="#gear" fill="#d8d8d8"/></svg>


<!-- scene transitions dock -->
<div class="a" style="left:709px;top:431.2px;width:129px;height:15.3px;background:#4b4b4b;border-radius:3px"></div>
<div class="a" style="left:823.3px;top:431.2px;width:1px;height:15.3px;background:#404040"></div>
<div class="a t f10" style="left:716px;top:435px">Fade</div>
<svg style="left:828.8px;top:434.8px" width="5" height="9"><path d="M0.6,2.8 L2.3,1 L4,2.8 M0.6,6 L2.3,7.8 L4,6" fill="none" stroke="#c8c8c8" stroke-width="0.9"/></svg>
<div class="a" style="left:841.2px;top:431.2px;width:15px;height:15px;background:#2f2f2f;border-radius:3px"></div>
<svg style="left:842.9px;top:432.7px" width="12" height="12"><use href="#gear" fill="#8c8c8c"/></svg>
<div class="a t f10" style="left:709px;top:452.3px">Duration</div>
<div class="a" style="left:749.5px;top:448px;width:96px;height:16px;background:#1f1f1f;border-radius:3px 0 0 3px"></div>
<div class="a t f10" style="left:755.5px;top:451.8px">300 ms</div>
<div class="a" style="left:845px;top:448px;width:11.5px;height:16px;background:#474747;border-radius:3px"></div>
<div class="a" style="left:845px;top:455.8px;width:11.5px;height:0.8px;background:#333"></div>
<svg style="left:845.5px;top:449.5px" width="11" height="14"><path d="M1.5,4.7 L5.2,1.2 L8.9,4.7 M1.5,8.5 L5.2,12 L8.9,8.5" fill="none" stroke="#dcdcdc" stroke-width="1.1"/></svg>

<!-- controls -->
<div class="cbtn" style="top:431px">Start Streaming</div>
<div class="cbtn" style="top:449.55px">Start Recording</div>
<div class="cbtn" style="top:468.1px">Start Virtual Camera</div>
<div class="cbtn" style="top:486.65px;background:#1f1f1f">Studio Mode</div>
<div class="cbtn" style="top:505.2px">Settings</div>
<div class="cbtn" style="top:523.75px">Exit</div>
<div class="a" style="left:1022px;top:0;width:2px;height:542px;background:rgba(255,255,255,0.07)"></div>
</body></html>
